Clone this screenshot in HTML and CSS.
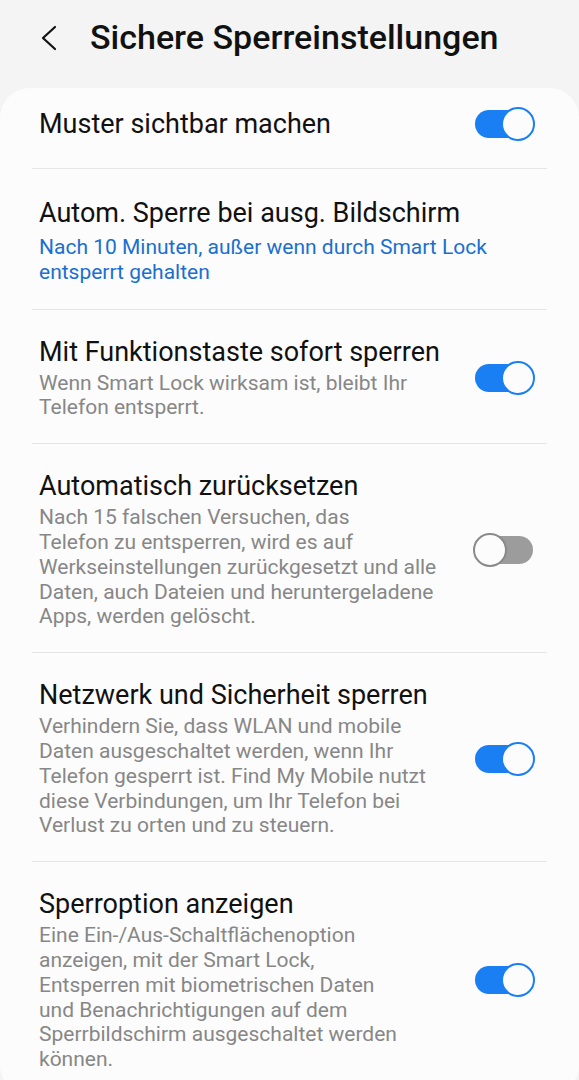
FILE: index.html
```html
<!DOCTYPE html>
<html lang="de">
<head>
  <meta charset="UTF-8">
  <meta name="viewport" content="width=device-width, initial-scale=1.0">
  <title>Sichere Sperreinstellungen</title>
  <link rel="stylesheet" href="styles.css">
</head>
<body>
  <header class="topbar">
    <svg class="back" width="18" height="26" viewBox="0 0 18 26">
      <path d="M15 2 L3 13 L15 24" fill="none" stroke="#111" stroke-width="2.2" stroke-linecap="round" stroke-linejoin="round"/>
    </svg>
    <h1>Sichere Sperreinstellungen</h1>
  </header>

  <main class="card">
    <!-- Muster -->
    <div class="row row-single">
      <div class="text">
        <div class="title">Muster sichtbar machen</div>
      </div>
      <span class="switch on"></span>
    </div>

    <div class="row row-link">
      <div class="text">
        <div class="title">Autom. Sperre bei ausg. Bildschirm</div>
        <div class="sub link">Nach 10 Minuten, außer wenn durch Smart Lock<br>entsperrt gehalten</div>
      </div>
    </div>

    <div class="row">
      <div class="text">
        <div class="title">Mit Funktionstaste sofort sperren</div>
        <div class="sub">Wenn Smart Lock wirksam ist, bleibt Ihr<br>Telefon entsperrt.</div>
      </div>
      <span class="switch on"></span>
    </div>

    <div class="row">
      <div class="text">
        <div class="title">Automatisch zurücksetzen</div>
        <div class="sub">Nach 15 falschen Versuchen, das<br>Telefon zu entsperren, wird es auf<br>Werkseinstellungen zurückgesetzt und alle<br>Daten, auch Dateien und heruntergeladene<br>Apps, werden gelöscht.</div>
      </div>
      <span class="switch"></span>
    </div>

    <div class="row">
      <div class="text">
        <div class="title">Netzwerk und Sicherheit sperren</div>
        <div class="sub">Verhindern Sie, dass WLAN und mobile<br>Daten ausgeschaltet werden, wenn Ihr<br>Telefon gesperrt ist. Find My Mobile nutzt<br>diese Verbindungen, um Ihr Telefon bei<br>Verlust zu orten und zu steuern.</div>
      </div>
      <span class="switch on"></span>
    </div>

    <div class="row">
      <div class="text">
        <div class="title">Sperroption anzeigen</div>
        <div class="sub">Eine Ein-/Aus-Schaltflächenoption<br>anzeigen, mit der Smart Lock,<br>Entsperren mit biometrischen Daten<br>und Benachrichtigungen auf dem<br>Sperrbildschirm ausgeschaltet werden<br>können.</div>
      </div>
      <span class="switch on"></span>
    </div>
  </main>
</body>
</html>
```

FILE: styles.css
```css
body { margin: 0; background: #f4f4f4; font-family: Roboto, "Liberation Sans", sans-serif; color: #111; }
.topbar { display: flex; align-items: center; gap: 32px; padding: 10px 0 0 40px; height: 64px; box-sizing: border-box; }
.topbar h1 { margin: 0; font-size: 34px; font-weight: 500; line-height: 40px; white-space: nowrap; }
.back { flex: none; margin-top: 2px; }
.card { margin-top: 24px; background: #fcfcfc; border-radius: 30px; padding: 0 32px; min-height: 1000px; }
.row { display: flex; align-items: center; padding: 26px 14px 23px 7px; border-bottom: 1px solid #e5e5e5; }
.row:last-child { border-bottom: none; }
.row-single { padding: 20px 14px 28px 7px; }
.row-link { padding: 28px 14px 24px 7px; }
.row-link .sub { margin-top: 6px; }
.text { flex: 1; white-space: nowrap; }
.title { font-size: 27px; line-height: 32px; }
.sub { margin-top: 3px; font-size: 21px; line-height: 24.8px; color: #878787; }
.sub.link { color: #1a6fd0; }
.switch { position: relative; flex: none; width: 58px; height: 28px; border-radius: 14px; background: #9c9c9c; margin-left: 16px; }
.switch::after { content: ""; position: absolute; top: -3px; left: -2px; width: 30px; height: 30px; border-radius: 50%; background: #fcfcfc; border: 2px solid #8a8a8a; }
.switch.on { background: #1a7ff2; }
.switch.on::after { left: auto; right: -2px; border-color: #1a7ff2; }
```
